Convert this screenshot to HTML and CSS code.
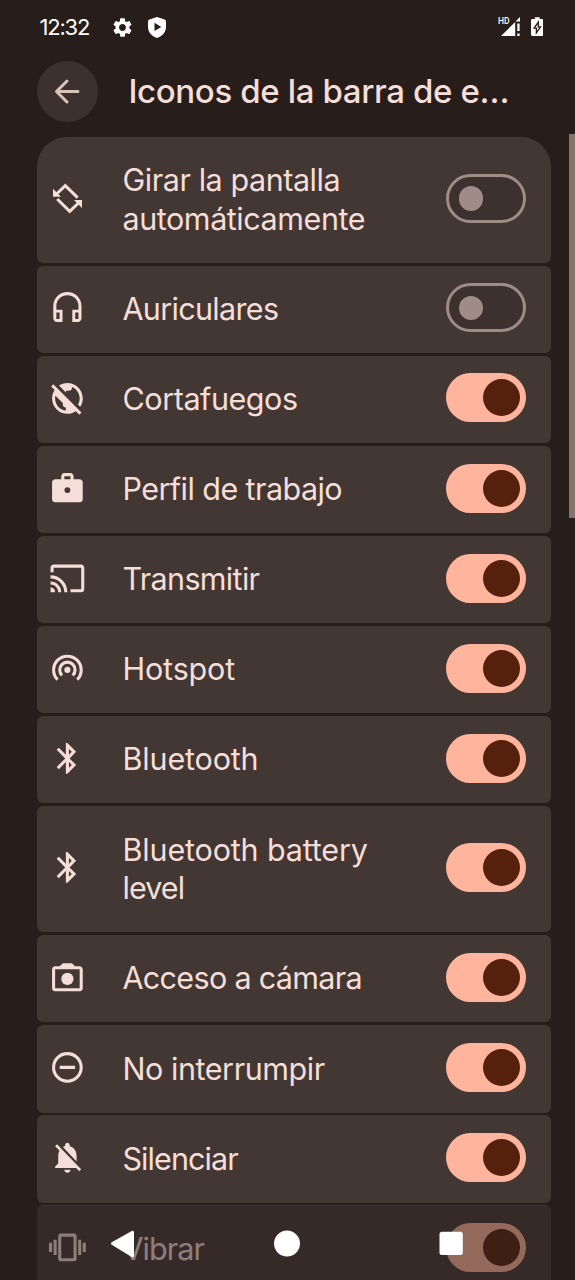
FILE: index.html
```html
<!DOCTYPE html>
<html lang="es">
<head>
<meta charset="utf-8">
<title>Iconos de la barra de estado</title>
<link rel="stylesheet" href="styles.css">
</head>
<body>
<div class="screen">
  <header class="status">
    <span class="clock">12:32</span>
    <svg class="gear" viewBox="0 0 24 24"><path fill-rule="evenodd" d="M19.140 12.940c.04-.3.06-.61.06-.94 0-.32-.02-.64-.07-.94l2.030-1.580c.18-.14.23-.41.12-.61l-1.920-3.320c-.12-.22-.37-.29-.59-.22l-2.390.96c-.5-.38-1.030-.7-1.620-.94l-.36-2.540c-.04-.24-.24-.41-.48-.41h-3.840c-.24 0-.43.17-.47.41l-.36 2.540c-.59.24-1.130.57-1.620.94l-2.390-.96c-.22-.08-.47 0-.59.22L2.740 8.870c-.12.21-.08.47.12.61l2.030 1.580c-.05.3-.09.63-.09.94s.02.64.07.94l-2.030 1.580c-.18.14-.23.41-.12.61l1.920 3.320c.12.22.37.29.59.22l2.390-.96c.5.38 1.030.7 1.620.94l.36 2.540c.05.24.24.41.48.41h3.840c.24 0 .44-.17.47-.41l.36-2.540c.59-.24 1.130-.56 1.620-.94l2.390.96c.22.08.47 0 .59-.22l1.920-3.320c.12-.22.07-.47-.12-.61l-2.010-1.580zM12 15.600c-1.980 0-3.600-1.620-3.600-3.600s1.620-3.600 3.600-3.600 3.600 1.620 3.600 3.600-1.620 3.600-3.600 3.600z"/></svg>
    <svg class="shield" viewBox="0 0 18 21"><path fill-rule="evenodd" d="M9 0l7.600 2.600Q18 3.200 18 4.600V10c0 5-3.600 9.300-9 11-5.400-1.700-9-6-9-11V4.600Q0 3.200 1.400 2.600zM6.500 5.800v8.200l6.800-4.100z"/></svg>
    <svg class="signal" viewBox="0 0 24 22"><path d="M3 20L17.200 6v14zM17.500 5.500l4.500-4.500v4.500z"/><path d="M19.300 7.500h2.300v7.500h-2.300zM19.300 17.500h2.300v2.500h-2.300z"/><text x="0" y="7.900">HD</text></svg>
    <svg class="battery" viewBox="0 0 13 20"><path d="M4 0h5v2h2.500Q13 2 13 3.500v14.500q0 1.500-1.500 1.500h-10Q0 19.500 0 18V3.500Q0 2 1.500 2H4z"/><path class="bolt" d="M7.600 5.200L3.200 11.400h2.400v5l4.300-6.300H7.600z"/></svg>
  </header>
  <div class="titlebar">
    <div class="back"><svg viewBox="0 0 61 61"><path d="M41 30.500H20M30 20L19.500 30.500 30 41"/></svg></div>
    <h1 class="title">Iconos de la barra de e…</h1>
  </div>
  <main class="list">
    <div class="row tall first">
      <svg class="icon" viewBox="0 0 36.800 36.800"><path class="line" d="M7 14.500L16.300 5.600 28.600 17.600M8.200 19L20.700 31.300 30 22.500"/><path d="M4 8.800v8h8zM33 28v-8h-8z"/></svg>
      <span class="label snug">Girar la pantalla<br>automáticamente</span><span class="switch off"></span>
    </div>
    <div class="row">
      <svg class="icon" viewBox="0 0 24 24"><path fill-rule="evenodd" d="M12 2c-5 0-9.200 4-9.200 9.200V18.800Q2.800 21.500 5.300 21.500H8.800V13.500H4.800V11.200a7.200 7.200 0 0 1 14.400 0V13.500H15.200v8h3.500q2.500 0 2.500-2.700V11.200C21.200 6 17 2 12 2zM6.900 15.400v4.200H4.800v-4.200zM19.200 15.400v4.200h-2.100v-4.200z"/></svg>
      <span class="label tight">Auriculares</span><span class="switch off"></span>
    </div>
    <div class="row">
      <svg class="icon" viewBox="0 0 24 24"><path d="M11 8.170L6.490 3.660C8.070 2.610 9.960 2 12 2c5.520 0 10 4.480 10 10 0 2.040-.61 3.930-1.660 5.510l-1.460-1.460C19.590 14.870 20 13.480 20 12c0-3.350-2.070-6.220-5-7.410V5c0 1.100-.9 2-2 2h-2v1.170zm10.190 13.020l-1.410 1.410-2.270-2.270C15.930 21.390 14.040 22 12 22 6.480 22 2 17.520 2 12c0-2.040.61-3.930 1.660-5.510L1.390 4.220 2.800 2.810l18.390 18.380zM11 18c-1.100 0-2-.9-2-2v-1l-4.790-4.790C4.080 10.790 4 11.380 4 12c0 4.080 3.050 7.440 7 7.930V18z"/></svg>
      <span class="label snug">Cortafuegos</span><span class="switch"></span>
    </div>
    <div class="row">
      <svg class="icon" viewBox="0 0 24 24"><path fill-rule="evenodd" d="M20 6h-4V4c0-1.100-.9-2-2-2h-4c-1.100 0-2 .9-2 2v2H4c-1.100 0-2 .9-2 2v11c0 1.100.9 2 2 2h16c1.100 0 2-.9 2-2V8c0-1.100-.9-2-2-2zm-6 0h-4V4h4v2zM12 11.200a1.900 1.900 0 1 0 0 3.800 1.900 1.900 0 0 0 0-3.800z"/></svg>
      <span class="label medium">Perfil de trabajo</span><span class="switch"></span>
    </div>
    <div class="row">
      <svg class="icon" viewBox="0 0 24 24"><path d="M21 3H3c-1.100 0-2 .9-2 2v3h2V5h18v14h-7v2h7c1.100 0 2-.9 2-2V5c0-1.100-.9-2-2-2zM1 18v3h3c0-1.660-1.340-3-3-3zm0-4v2c2.760 0 5 2.240 5 5h2c0-3.870-3.130-7-7-7zm0-4v2c4.970 0 9 4.030 9 9h2c0-6.080-4.930-11-11-11z"/></svg>
      <span class="label tight">Transmitir</span><span class="switch"></span>
    </div>
    <div class="row">
      <svg class="icon" viewBox="0 0 24 24"><circle cx="12" cy="13" r="2"/><path class="thin" d="M5.600 19.350A9 9 0 1 1 18.400 19.350M8.500 16.500A5 5 0 1 1 15.500 16.500"/></svg>
      <span class="label loose">Hotspot</span><span class="switch"></span>
    </div>
    <div class="row">
      <svg class="icon" viewBox="0 0 24 24"><path d="M17.710 7.710L12 2h-1v7.590L6.410 5 5 6.410 10.590 12 5 17.590 6.410 19 11 14.410V22h1l5.710-5.710-4.300-4.290 4.300-4.290zM13 5.830l1.880 1.880L13 9.590V5.830zm1.880 10.460L13 18.170v-3.760l1.880 1.880z"/></svg>
      <span class="label loose">Bluetooth</span><span class="switch"></span>
    </div>
    <div class="row tall">
      <svg class="icon" viewBox="0 0 24 24"><path d="M17.710 7.710L12 2h-1v7.590L6.410 5 5 6.410 10.590 12 5 17.590 6.410 19 11 14.410V22h1l5.710-5.710-4.300-4.290 4.300-4.290zM13 5.830l1.880 1.880L13 9.590V5.830zm1.880 10.460L13 18.170v-3.760l1.880 1.880z"/></svg>
      <span class="label loose">Bluetooth battery<br><span class="narrow">level</span></span><span class="switch"></span>
    </div>
    <div class="row">
      <svg class="icon" viewBox="0 0 24 24"><path fill-rule="evenodd" d="M9 2.700h6L17 4.700h3c1.100 0 2 .9 2 2V19c0 1.100-.9 2-2 2H4c-1.100 0-2-.9-2-2V6.700c0-1.100.9-2 2-2h3zM4 6.700V19h16V6.700z"/><circle cx="12" cy="13" r="4"/></svg>
      <span class="label tight">Acceso a cámara</span><span class="switch"></span>
    </div>
    <div class="row">
      <svg class="icon" viewBox="0 0 24 24"><path class="thin" d="M12 3a9 9 0 1 0 0 18 9 9 0 0 0 0-18zM7 12h10"/></svg>
      <span class="label snug">No interrumpir</span><span class="switch"></span>
    </div>
    <div class="row">
      <svg class="icon" viewBox="0 0 24 24"><path d="M20 18.690L7.840 6.140 5.270 3.490 4 4.760l2.800 2.800v.01c-.52.990-.8 2.160-.8 3.420v5l-2 2v1h13.730l2 2L21 19.720l-1-1.030zM12 22c1.110 0 2-.89 2-2h-4c0 1.110.89 2 2 2zm6-7.320V11c0-3.080-1.640-5.640-4.500-6.320V4c0-.83-.67-1.500-1.500-1.500s-1.500.67-1.500 1.500v.68c-.15.03-.29.08-.42.12-.1.03-.2.07-.3.11-.24.09-.47.200-.71.330L18 14.680z"/></svg>
      <span class="label narrow">Silenciar</span><span class="switch"></span>
    </div>
    <div class="row">
      <svg class="icon" viewBox="0 0 24 24"><path fill-rule="evenodd" d="M0 15h2V9H0v6zm3 2h2V7H3v10zm19-8v6h2V9h-2zm-3 8h2V7h-2v10zM16.500 3h-9C6.670 3 6 3.670 6 4.500v15c0 .83.67 1.500 1.500 1.500h9c.83 0 1.500-.67 1.500-1.500v-15c0-.83-.67-1.500-1.500-1.500zM16 19H8V5h8v14z"/></svg>
      <span class="label narrow">Vibrar</span><span class="switch"></span>
    </div>
  </main>
  <div class="scrollbar"></div>
  <nav class="navbar">
    <svg viewBox="0 0 575 74"><path class="tri" d="M112.500 37.500L132.500 26.300V49.700z"/><circle cx="287" cy="37.600" r="13"/><rect x="439.500" y="25.800" width="23.300" height="23.300" rx="2.500"/></svg>
  </nav>
</div>
</body>
</html>
```
FILE: styles.css
```css
* { box-sizing: border-box; }
body { margin: 0; background: #271d1b; font-family: Inter, "Noto Sans", sans-serif; }
.screen { position: relative; width: 575px; height: 1280px; overflow: hidden; background: #271d1b; }
svg { display: block; flex: none; fill: currentColor; }
.status { display: flex; align-items: center; height: 54px; padding: 0 32px 0 39.500px; color: #fff; }
.clock { width: 72px; font-size: 22px; letter-spacing: -1.200px; }
.gear { width: 23px; height: 23px; margin-left: -0.500px; }
.shield { width: 18px; height: 21px; margin-left: 13.500px; }
.signal { width: 24px; height: 22px; margin-left: auto; }
.signal text { font: 500 8.500px Roboto, sans-serif; }
.battery { width: 12.500px; height: 19.500px; margin-left: 8.500px; }
.bolt { stroke: #271d1b; stroke-width: 1.400; }
.titlebar { display: flex; align-items: center; height: 74px; padding-left: 37px; }
.back { width: 61px; height: 61px; border-radius: 50%; background: #3d312f; color: #d8c2bb; }
.back path { fill: none; stroke: currentColor; stroke-width: 3; stroke-linecap: round; stroke-linejoin: round; }
.title { margin: 0 0 0 30.500px; font-size: 33px; font-weight: 500; line-height: 40px; color: #f5ded8; white-space: nowrap; letter-spacing: -0.370px; }
.list { display: flex; flex-direction: column; gap: 2.900px; margin: 8.800px 24.500px 0 37px; }
.row { display: flex; align-items: center; flex: none; height: 87.200px; padding: 0 24.500px 3px 12px; border-radius: 6px; background: #423733; color: #f5ded8; }
.tall { height: 126.100px; }
.first { border-radius: 30px 30px 6px 6px; }
.icon { width: 36.800px; height: 36.800px; }
.line { fill: none; stroke: currentColor; stroke-width: 3; }
.thin { fill: none; stroke: currentColor; stroke-width: 2; }
.label { flex: 1; margin-left: 36.700px; padding-top: 3px; font-size: 30.500px; line-height: 38.800px; white-space: nowrap; }
.loose { letter-spacing: -0.160px; }
.snug { letter-spacing: -0.440px; }
.medium { letter-spacing: -0.560px; }
.tight { letter-spacing: -0.670px; }
.narrow { letter-spacing: -0.930px; }
.switch { display: flex; align-items: center; justify-content: flex-end; width: 80px; height: 49px; padding: 0 6px; border-radius: 25px; background: #ffb59d; }
.switch::before { content: ""; width: 37px; height: 37px; border-radius: 50%; background: #55200c; }
.off { justify-content: flex-start; padding: 0 9.500px; border: 3px solid #a08c86; background: #3d312f; }
.off::before { width: 24.500px; height: 24.500px; background: #a08c86; }
.scrollbar { position: absolute; right: 0; top: 134px; width: 6px; height: 384px; background: #85736e; }
.navbar { position: absolute; left: 0; bottom: 0; width: 575px; height: 74px; background: rgba(39, 29, 27, 0.5); color: #fff; }
.tri { stroke: currentColor; stroke-width: 3; stroke-linejoin: round; }
```
